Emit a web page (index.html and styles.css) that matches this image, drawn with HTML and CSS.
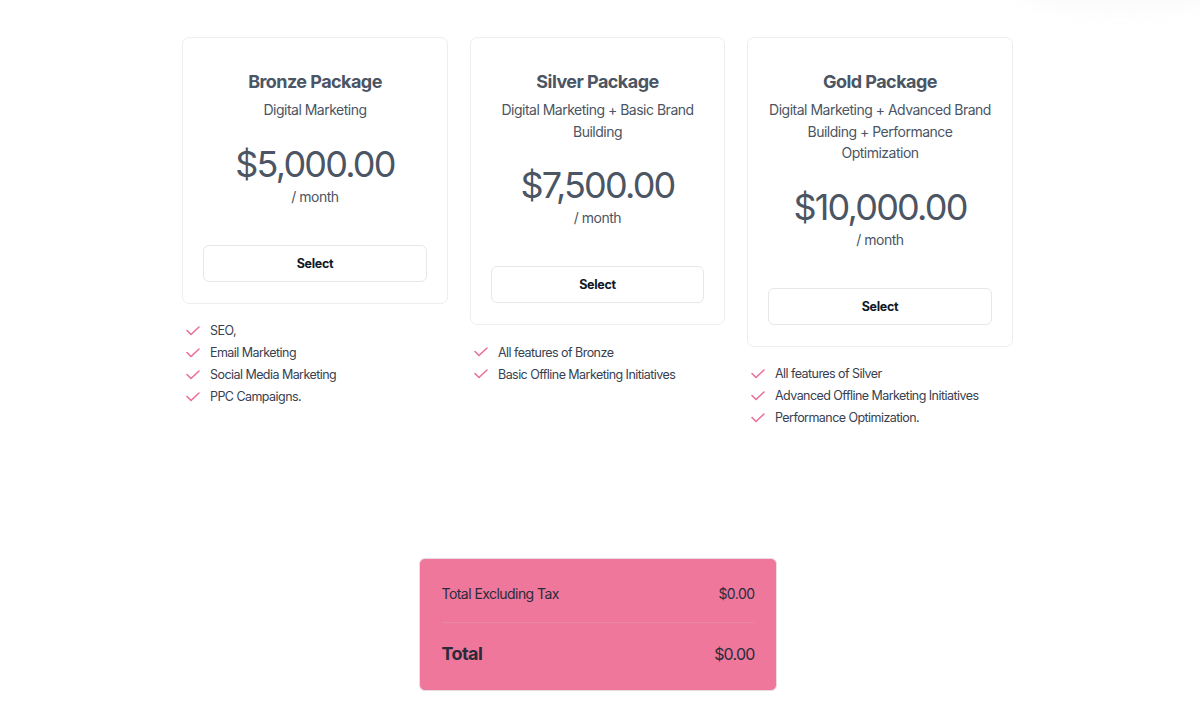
FILE: index.html
```html
<!DOCTYPE html>
<html>
<head>
<meta charset="utf-8">
<link rel="stylesheet" href="styles.css">
</head>
<body>
<div class="glow"></div>
<div class="wrap">
  <div class="plans">
    <div class="col col-wide">
      <div class="card">
        <h2 class="title">Bronze Package</h2>
        <p class="sub">Digital Marketing</p>
        <div class="price">$5,000.00</div>
        <div class="per">/ month</div>
        <button class="btn">Select</button>
      </div>
      <ul class="feats">
        <li><svg class="chk" viewBox="0 0 14 10"><path d="M1 4.5 L5 8.5 L13 1"/></svg>SEO,</li>
        <li><svg class="chk" viewBox="0 0 14 10"><path d="M1 4.5 L5 8.5 L13 1"/></svg>Email Marketing</li>
        <li><svg class="chk" viewBox="0 0 14 10"><path d="M1 4.5 L5 8.5 L13 1"/></svg>Social Media Marketing</li>
        <li><svg class="chk" viewBox="0 0 14 10"><path d="M1 4.5 L5 8.5 L13 1"/></svg>PPC Campaigns.</li>
      </ul>
    </div>
    <div class="col col-narrow">
      <div class="card">
        <h2 class="title">Silver Package</h2>
        <p class="sub">Digital Marketing + Basic Brand Building</p>
        <div class="price">$7,500.00</div>
        <div class="per">/ month</div>
        <button class="btn">Select</button>
      </div>
      <ul class="feats">
        <li><svg class="chk" viewBox="0 0 14 10"><path d="M1 4.5 L5 8.5 L13 1"/></svg>All features of Bronze</li>
        <li><svg class="chk" viewBox="0 0 14 10"><path d="M1 4.5 L5 8.5 L13 1"/></svg>Basic Offline Marketing Initiatives</li>
      </ul>
    </div>
    <div class="col col-wide">
      <div class="card">
        <h2 class="title">Gold Package</h2>
        <p class="sub">Digital Marketing + Advanced Brand Building + Performance Optimization</p>
        <div class="price">$10,000.00</div>
        <div class="per">/ month</div>
        <button class="btn">Select</button>
      </div>
      <ul class="feats">
        <li><svg class="chk" viewBox="0 0 14 10"><path d="M1 4.5 L5 8.5 L13 1"/></svg>All features of Silver</li>
        <li><svg class="chk" viewBox="0 0 14 10"><path d="M1 4.5 L5 8.5 L13 1"/></svg>Advanced Offline Marketing Initiatives</li>
        <li><svg class="chk" viewBox="0 0 14 10"><path d="M1 4.5 L5 8.5 L13 1"/></svg>Performance Optimization.</li>
      </ul>
    </div>
  </div>
  <div class="summary">
    <div class="row row-sub">
      <span>Total Excluding Tax</span>
      <span>$0.00</span>
    </div>
    <div class="row row-total">
      <span class="tl">Total</span>
      <span class="tv">$0.00</span>
    </div>
  </div>
</div>
</body>
</html>
```

FILE: styles.css
```css
* { box-sizing: border-box; }
html, body { margin: 0; padding: 0; background: #fff; }
body {
  font-family: Inter, "Noto Sans", "Liberation Sans", sans-serif;
  color: #4b5563;
  overflow: hidden;
  height: 724px;
  letter-spacing: -0.5px;
}
.glow {
  position: absolute;
  top: -30px;
  right: -20px;
  width: 200px;
  height: 40px;
  border-radius: 50%;
  background: #f7f7f7;
  filter: blur(10px);
  opacity: 0.7;
}
.wrap {
  width: 831px;
  margin-left: 182px;
  padding-top: 37px;
}
.plans {
  display: flex;
  align-items: flex-start;
  gap: 22px;
}
.col-wide { width: 266px; }
.col-narrow { width: 255px; }
.card {
  border: 1px solid #eceef1;
  border-radius: 7px;
  padding: 30px 20px 21px;
  text-align: center;
  background: #fff;
}
.title {
  margin: 0;
  font-size: 18px;
  line-height: 28px;
  font-weight: 700;
  color: #4b5563;
  letter-spacing: -0.55px;
}
.sub {
  margin: 3px 0 0;
  font-size: 14px;
  line-height: 21.5px;
  color: #4b5563;
  letter-spacing: -0.5px;
}
.price {
  margin-top: 23px;
  font-size: 36px;
  line-height: 40px;
  font-weight: 400;
  color: #4b5563;
  letter-spacing: -1.8px;
}
.per {
  margin-top: 2px;
  font-size: 14px;
  line-height: 21px;
  color: #4b5563;
}
.btn {
  display: block;
  width: 100%;
  height: 37px;
  margin-top: 38px;
  border: 1px solid #e5e7eb;
  border-radius: 6px;
  background: #fff;
  font-family: inherit;
  font-size: 12.5px;
  font-weight: 700;
  color: #111827;
  letter-spacing: -0.3px;
}
.feats {
  list-style: none;
  margin: 16px 0 0;
  padding: 0 0 0 4px;
}
.feats li {
  display: flex;
  align-items: center;
  height: 22px;
  font-size: 12.5px;
  color: #374151;
  letter-spacing: -0.55px;
}
.chk {
  width: 14px;
  height: 10px;
  margin-right: 10px;
  flex: none;
}
.chk path {
  fill: none;
  stroke: #ec7096;
  stroke-width: 1.6;
  stroke-linecap: round;
  stroke-linejoin: round;
}
.summary {
  width: 358px;
  margin: 129px auto 0;
  background: #ee779b;
  border: 1px solid #e9dde2;
  border-radius: 6px;
  padding: 25px 21px 22px 22px;
  color: #2a2b3a;
}
.row {
  display: flex;
  justify-content: space-between;
  align-items: center;
}
.row-sub {
  font-size: 14px;
  line-height: 20px;
  padding-bottom: 18px;
  border-bottom: 1px solid #e888a5;
  letter-spacing: -0.55px;
}
.row-total {
  padding-top: 17px;
  line-height: 28px;
}
.tl {
  font-size: 18px;
  font-weight: 700;
  letter-spacing: -0.6px;
}
.tv {
  font-size: 16px;
  letter-spacing: -0.8px;
}
```
